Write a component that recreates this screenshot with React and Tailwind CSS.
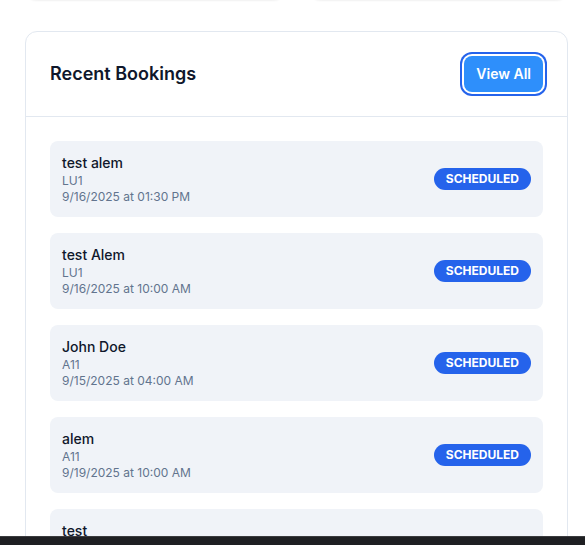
const bookings = [
  { name: 'test alem', unit: 'LU1', when: '9/16/2025 at 01:30 PM' },
  { name: 'test Alem', unit: 'LU1', when: '9/16/2025 at 10:00 AM' },
  { name: 'John Doe', unit: 'A11', when: '9/15/2025 at 04:00 AM' },
  { name: 'alem', unit: 'A11', when: '9/19/2025 at 10:00 AM' },
  { name: 'test', unit: 'B12', when: '9/20/2025 at 09:00 AM' },
];

export default function App() {
  return (
    <div className="h-screen overflow-hidden bg-white font-['Inter','Noto_Sans',sans-serif] text-slate-900">
      <div className="ml-[25px] w-[543px]">
        {/* stat cards above, scrolled out of view */}
        <div className="grid grid-cols-2 gap-6 -mt-20">
          <div className="h-20 rounded-xl bg-white shadow-[0_1px_2px_rgba(0,0,0,0.06)]" />
          <div className="h-20 rounded-xl bg-white shadow-[0_1px_2px_rgba(0,0,0,0.06)]" />
        </div>

        {/* Recent Bookings */}
        <section className="mt-[31px] rounded-xl border border-slate-200 bg-white">
          <div className="flex items-center justify-between border-b border-slate-200 px-6 py-6">
            <h2 className="text-lg font-semibold text-slate-900">Recent Bookings</h2>
            <button className="rounded-lg bg-[#2e8ffb] px-3 py-2 text-sm font-semibold text-white ring-2 ring-[#2563eb] ring-offset-2">
              View All
            </button>
          </div>
          <div className="flex flex-col gap-4 p-6">
            {bookings.map((b, i) => (
              <div key={i} className="flex items-center justify-between rounded-lg bg-[#f0f3f8] p-3">
                <div>
                  <p className="text-sm font-medium text-slate-900">{b.name}</p>
                  <p className="text-xs text-slate-500">{b.unit}</p>
                  <p className="text-xs text-slate-500">{b.when}</p>
                </div>
                <span className="rounded-full bg-[#2563eb] px-3 py-[3px] text-xs font-bold uppercase text-white">
                  Scheduled
                </span>
              </div>
            ))}
          </div>
        </section>
      </div>

      {/* bottom bar */}
      <div className="fixed inset-x-0 bottom-0 h-[9px] border-t border-[#3a3b3e] bg-[#1e1f22]" />
    </div>
  );
}
